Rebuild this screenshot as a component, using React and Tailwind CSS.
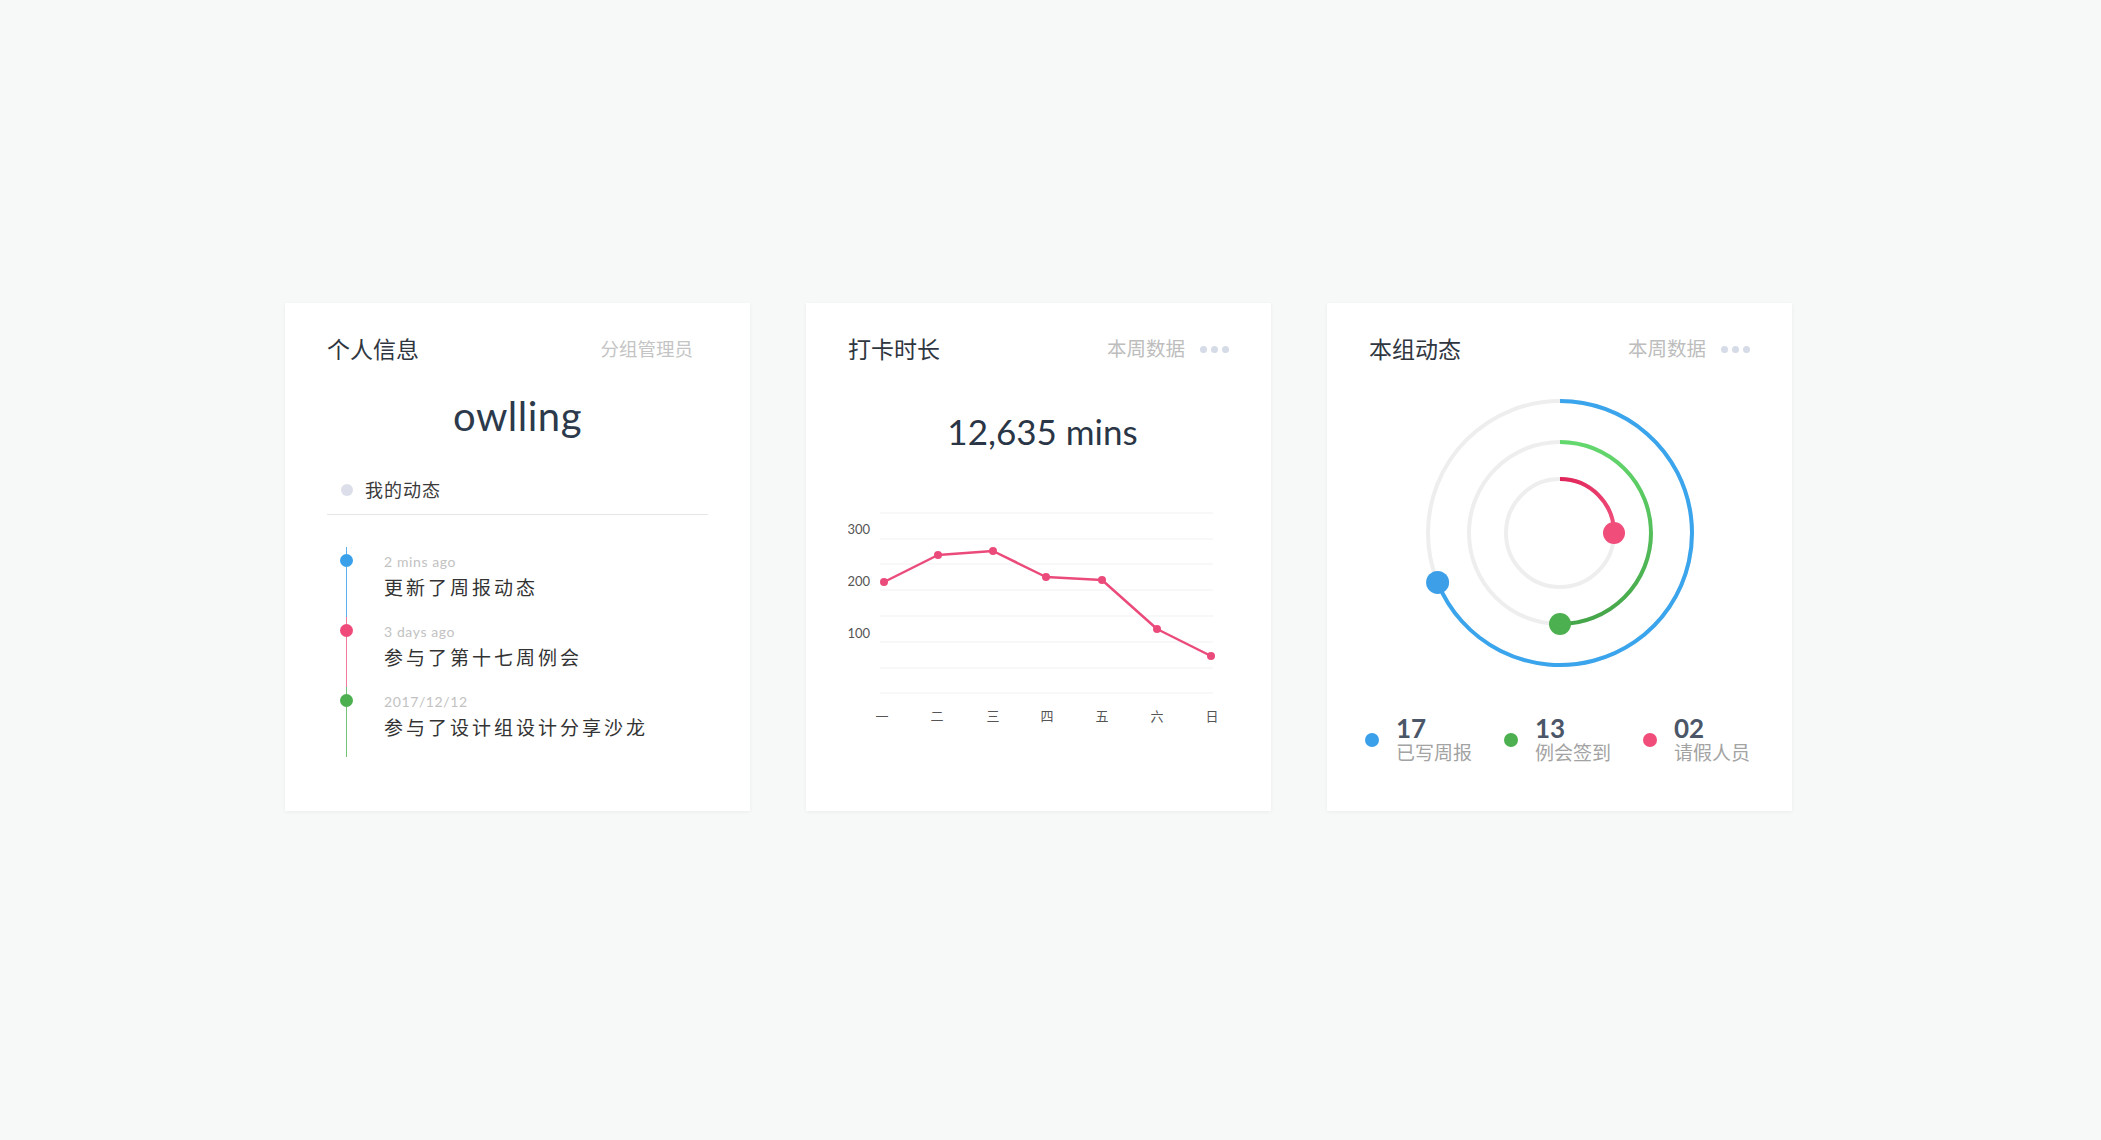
const font = "font-['Lato','Noto_Sans_CJK_SC',sans-serif]"

const timeline = [
    { time: "2 mins ago", text: "更新了周报动态", color: "bg-[#3ba0ea]", line: "bg-[#5db0ee]" },
    { time: "3 days ago", text: "参与了第十七周例会", color: "bg-[#ef4a7a]", line: "bg-[#f07a9c]" },
    { time: "2017/12/12", text: "参与了设计组设计分享沙龙", color: "bg-[#4caf50]", line: "bg-[#74c477]" },
]

const chartPoints = [
    [36, 82], [90, 55], [145, 51], [198, 77], [254, 80], [309, 129], [363, 156],
]
const days = ["一", "二", "三", "四", "五", "六", "日"]
const dayX = [34, 89, 145, 199, 254, 309, 364]
const gridY = [13, 39, 64, 90, 116, 142, 168, 193]

const legend = [
    { num: "17", label: "已写周报", color: "bg-[#3ba0ea]" },
    { num: "13", label: "例会签到", color: "bg-[#4caf50]" },
    { num: "02", label: "请假人员", color: "bg-[#f04d7b]" },
]

function MoreDots() {
    return (
        <div className="flex gap-[4px] ml-[15px]">
            <span className="w-[7px] h-[7px] rounded-full bg-[#d5dbe7]" />
            <span className="w-[7px] h-[7px] rounded-full bg-[#d5dbe7]" />
            <span className="w-[7px] h-[7px] rounded-full bg-[#d5dbe7]" />
        </div>
    )
}

function CardHeader({ title, children }) {
    return (
        <div className="flex items-center justify-between h-[30px]">
            <h2 className="text-[23px] leading-[30px] text-[#2f3640] font-normal">{title}</h2>
            <div className="flex items-center">{children}</div>
        </div>
    )
}

function ProfileCard() {
    return (
        <div className="w-[465px] h-[508px] bg-white shadow-[0_1px_4px_rgba(0,0,0,0.05)] px-[42px] pt-[31px]">
            <CardHeader title="个人信息">
                <span className="text-[18.5px] leading-[30px] text-[#c4c4c4] mr-[15px]">分组管理员</span>
            </CardHeader>

            <p className="mt-[29px] text-center text-[40px] leading-[46px] tracking-[0.5px] text-[#2c3a4b]">owlling</p>

            <div className="mt-[39px] pb-[12px] border-b border-[#e6e6e6] flex items-center">
                <span className="ml-[14px] w-[12px] h-[12px] rounded-full bg-[#dcdfe9]" />
                <span className="ml-[12px] text-[18px] leading-[24px] text-[#3a3a3a] tracking-[1px]">我的动态</span>
            </div>

            <div className="mt-[32px] ml-[13px]">
                {timeline.map(function (item) {
                    return (
                        <div key={item.time} className="flex h-[70px]">
                            <div className="w-[13px] flex flex-col items-center">
                                <div className={"h-[7px] w-[1.5px] " + item.line} />
                                <div className={"w-[13px] h-[13px] rounded-full shrink-0 " + item.color} />
                                <div className={"flex-1 w-[1.5px] " + item.line} />
                            </div>
                            <div className="ml-[31px] pt-[7px]">
                                <p className="text-[14px] leading-[16px] tracking-[0.6px] text-[#c2c2c2]">{item.time}</p>
                                <p className="mt-[5px] text-[19px] leading-[26px] text-[#333] tracking-[3px]">{item.text}</p>
                            </div>
                        </div>
                    )
                })}
            </div>
        </div>
    )
}

function ChartCard() {
    const line = chartPoints.map(function (p) { return p.join(",") }).join(" ")

    return (
        <div className="w-[465px] h-[508px] bg-white shadow-[0_1px_4px_rgba(0,0,0,0.05)] px-[42px] pt-[31px]">
            <CardHeader title="打卡时长">
                <span className="text-[19.5px] leading-[30px] text-[#bdbdbd]">本周数据</span>
                <MoreDots />
            </CardHeader>

            <p className="mt-[45px] pl-[8px] text-center text-[35px] leading-[44px] text-[#2a3646]">12,635 mins</p>

            <svg width="382" height="230" className="mt-[47px] block">
                {gridY.map(function (y) {
                    return <line key={y} x1="32" x2="365" y1={y} y2={y} stroke="#f0f1f3" strokeWidth="1" />
                })}
                <g fontSize="13" fill="#555" textAnchor="end" fontFamily="Lato, sans-serif">
                    <text x="22" y="34">300</text>
                    <text x="22" y="86">200</text>
                    <text x="22" y="138">100</text>
                </g>
                <polyline points={line} fill="none" stroke="#eb4b7b" strokeWidth="2.5" strokeLinejoin="round" />
                {chartPoints.map(function (p) {
                    return <circle key={p[0]} cx={p[0]} cy={p[1]} r="4" fill="#eb4b7b" />
                })}
                <g fontSize="13" fill="#555" textAnchor="middle" fontFamily="Noto Sans CJK SC, sans-serif">
                    {days.map(function (d, i) {
                        return <text key={d} x={dayX[i]} y="221">{d}</text>
                    })}
                </g>
            </svg>
        </div>
    )
}

function RingsCard() {
    return (
        <div className="w-[465px] h-[508px] bg-white shadow-[0_1px_4px_rgba(0,0,0,0.05)] px-[42px] pt-[31px]">
            <CardHeader title="本组动态">
                <span className="text-[19.5px] leading-[30px] text-[#bdbdbd]">本周数据</span>
                <MoreDots />
            </CardHeader>

            <div className="mt-[19px] flex justify-center">
                <svg width="300" height="300" className="block">
                    <defs>
                        <linearGradient id="greenArc" x1="0" y1="0" x2="0" y2="1">
                            <stop offset="0" stopColor="#63d86d" />
                            <stop offset="1" stopColor="#45a549" />
                        </linearGradient>
                        <linearGradient id="redArc" x1="0" y1="0" x2="1" y2="1">
                            <stop offset="0" stopColor="#e0245a" />
                            <stop offset="1" stopColor="#f2527e" />
                        </linearGradient>
                    </defs>
                    <circle cx="150" cy="150" r="132" fill="none" stroke="#eeeeee" strokeWidth="4" />
                    <circle cx="150" cy="150" r="91" fill="none" stroke="#eeeeee" strokeWidth="4" />
                    <circle cx="150" cy="150" r="54" fill="none" stroke="#eeeeee" strokeWidth="4" />

                    <path d="M150 18 A132 132 0 1 1 27.6 199.4" fill="none" stroke="#3aa5ec" strokeWidth="4" />
                    <path d="M150 59 A91 91 0 0 1 150 241" fill="none" stroke="url(#greenArc)" strokeWidth="4" />
                    <path d="M150 96 A54 54 0 0 1 204 150" fill="none" stroke="url(#redArc)" strokeWidth="4" />

                    <circle cx="27.6" cy="199.4" r="11.5" fill="#3d9fe8" />
                    <circle cx="150" cy="241" r="11" fill="#4caf50" />
                    <circle cx="204" cy="150" r="11" fill="#f04d7b" />
                </svg>
            </div>

            <div className="mt-[34px] -ml-[4px] flex">
                {legend.map(function (item) {
                    return (
                        <div key={item.num} className="w-[139px] shrink-0 flex items-center">
                            <span className={"w-[14px] h-[14px] rounded-full shrink-0 " + item.color} />
                            <div className="ml-[17px]">
                                <p className="text-[26px] leading-[23px] font-bold text-[#4b5668]">{item.num}</p>
                                <p className="mt-[3px] text-[19px] leading-[20px] text-[#a3a3a3]">{item.label}</p>
                            </div>
                        </div>
                    )
                })}
            </div>
        </div>
    )
}

export default function App() {
    return (
        <div className={"min-h-screen bg-[#f7f8f8] pl-[285px] pt-[303px] " + font}>
            <div className="flex gap-[56px]">
                <ProfileCard />
                <ChartCard />
                <RingsCard />
            </div>
        </div>
    )
}
